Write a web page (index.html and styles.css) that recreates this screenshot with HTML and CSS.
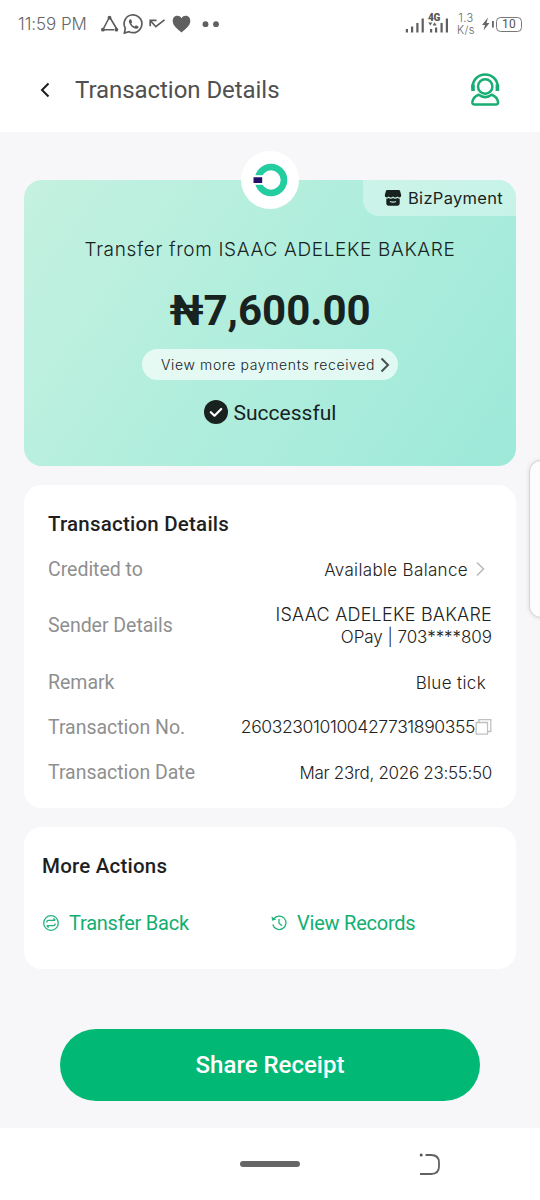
FILE: index.html
```html
<!DOCTYPE html>
<html lang="en">
<head>
<meta charset="utf-8">
<title>Transaction Details</title>
<link rel="stylesheet" href="styles.css">
</head>
<body>
<div class="screen">
  <div class="status">
    <span class="clock">11:59 PM</span>
    <svg class="status-left" width="122" height="28" viewBox="100 10 122 28" fill="none" stroke="#5c5c5c" stroke-width="1.6">
      <path d="M104 29.800H114M103.500 28.500L109 18M110.500 18.500L116.500 28.500"/>
      <g fill="#5b5b5b" stroke="none"><circle cx="109.500" cy="17.700" r="1.900"/><circle cx="102.900" cy="29.700" r="1.900"/><circle cx="116.400" cy="29.700" r="1.900"/></g>
      <path d="M125.300 28.200A8.900 8.900 0 1 1 129 31.700L124.400 33Z" stroke-width="1.700"/>
      <path d="M130 19.300q-1.500 1-1.100 2.800q1.400 5 6.700 6.700q2 .3 3-1.300l-.2-1l-2.400-1.200l-1.400 1.300q-2.300-1-3.400-3.200l1-1.200l-1-2.600z" fill="#5b5b5b" stroke="none"/>
      <path d="M150.500 20.700L155.800 26.700L164.500 19.800M150.200 26.200V20.400H156.500" stroke-width="1.700"/>
      <path d="M181.500 32.500C177 28.500 172.700 25.500 172.700 21C172.700 15.300 179 14.200 181.500 18.200C184 14.200 190.300 15.300 190.300 21C190.300 25.500 186 28.500 181.500 32.500Z" fill="#606060" stroke="none"/>
      <g fill="#606060" stroke="none"><circle cx="205.500" cy="24.200" r="2.900"/><circle cx="216" cy="24.200" r="2.900"/></g>
    </svg>
    <div class="status-right">
      <div class="signals">
        <svg width="46" height="24" viewBox="404 10.500 46 24" fill="#5f5f5f"><path d="M405.800 27.500h2.200V31h-2.200zM411 25h2.200v6h-2.200zM416.300 21.500h2.200V31h-2.200zM421.600 17h2.200v14h-2.200zM430 27.500h2.200V31h-2.200zM435 26h2.200v5h-2.200zM440.500 21.500h2.200V31h-2.200zM445.800 17h2.200v14h-2.200zM428.300 21h4l-2 3zM432.600 24h4l-2-3.200z"/></svg>
        <span class="net">4G</span>
      </div>
      <span class="speed">1.3<br>K/s</span>
      <svg width="13" height="20" viewBox="481 14 13 20" fill="#666"><path d="M488 17.500L482 25h3l-1.500 5.500L489.500 23h-3z"/><rect x="492" y="21" width="1.800" height="6.500"/></svg>
      <span class="battery">10</span>
    </div>
  </div>

  <div class="header">
    <svg class="back" width="12" height="18" viewBox="0 0 12 18" fill="none" stroke="#1c1c1c" stroke-width="2"><path d="M9.500 2.500L3 9L9.500 15.500"/></svg>
    <h1 class="header-title">Transaction Details</h1>
    <svg width="32" height="36" viewBox="469 72 32 36" fill="none" stroke="#18ad72" stroke-width="2.500">
      <path d="M472.700 88v-1.500a12.500 12 0 0 1 25 0V88"/>
      <path d="M473 84.500v6.500M497.400 84.500v6.500" stroke-width="3.600"/>
      <circle cx="485.200" cy="86.500" r="7.200"/>
      <path d="M478.700 94.700q6.500 4.800 13 0q5.600 2 6.400 7.500q.2 2.300-2.300 2.300h-21.200q-2.500 0-2.300-2.300q.8-5.500 6.400-7.500z" stroke-linejoin="round"/>
    </svg>
  </div>

  <main class="content">
    <section class="hero">
      <div class="logo">
        <svg width="36" height="36" viewBox="252 162 36 36"><circle cx="271" cy="180" r="13" fill="none" stroke="#24cda0" stroke-width="6.600"/><path d="M252 175.200h12v9.600h-12z" fill="#fff"/><path d="M253.500 177.200h8.700v5.800h-8.700z" fill="#241163"/></svg>
      </div>
      <div class="biz">
        <svg width="18" height="18" viewBox="0 0 18 18" fill="#18221f"><path d="M3.200 1h11.600q.8 0 1.200.8L17.200 6q.3 2.300-1.700 2.600q-1.300 0-2.100-1q-.9 1-2.200 1T9 7.600q-.9 1-2.200 1t-2.200-1q-.8 1-2.100 1Q.5 8.300.8 6L2 1.800Q2.400 1 3.200 1zM2.300 9.800q1.400 0 2.300-.8q1 .8 2.200.8T9 9q1 .8 2.200.8t2.200-.8q.9.800 2.300.8V14q0 2.800-2.500 2.800H4.800Q2.300 16.800 2.300 14z"/><path d="M6 12.500q3 1.300 6 0" stroke="#c5f1e5" stroke-width="1.200" fill="none"/></svg>
        <span class="biz-text">BizPayment</span>
      </div>
      <p class="from">Transfer from ISAAC ADELEKE BAKARE</p>
      <p class="amount">₦7,600.00</p>
      <div class="more-payments"><span>View more payments received</span>
        <svg width="10" height="16" viewBox="0 0 10 16" fill="none" stroke="#43524e" stroke-width="2"><path d="M1.500 1.500L8 8L1.500 14.500"/></svg>
      </div>
      <div class="success">
        <svg width="24" height="24" viewBox="0 0 24 24"><circle cx="12" cy="12" r="12" fill="#18221f"/><path d="M6.800 12.200L10.500 15.700L17.200 9" fill="none" stroke="#fff" stroke-width="2.200" stroke-linecap="round" stroke-linejoin="round"/></svg>
        <span class="success-text">Successful</span>
      </div>
    </section>

    <section class="card details">
      <h2 class="card-title">Transaction Details</h2>
      <div class="row"><span class="label">Credited to</span><span class="value"><span class="v-balance">Available Balance</span><svg class="chevron" width="9" height="16" viewBox="0 0 9 16" fill="none" stroke="#bbb" stroke-width="1.600"><path d="M1 1.500L7.500 8L1 14.500"/></svg></span></div>
      <div class="row row-tall"><span class="label">Sender Details</span><span class="value stacked"><span class="v-name">ISAAC ADELEKE BAKARE</span><span class="v-account">OPay | 703****809</span></span></div>
      <div class="row"><span class="label">Remark</span><span class="value v-remark">Blue tick</span></div>
      <div class="row"><span class="label">Transaction No.</span><span class="value number-group"><span class="v-number">260323010100427731890355</span><svg width="17" height="18" viewBox="0 0 17 18" fill="none" stroke="#c0c0c0" stroke-width="1.300"><path d="M1.200 4.500h11.300v11.700H1.200zM4 4.500V1.700h11.800v11.800h-3.300"/></svg></span></div>
      <div class="row"><span class="label">Transaction Date</span><span class="value v-date">Mar 23rd, 2026 23:55:50</span></div>
    </section>

    <section class="card actions">
      <h2 class="card-title">More Actions</h2>
      <div class="action-row">
        <div class="action">
          <svg width="18" height="18" viewBox="0 0 18 18" fill="none" stroke="#22b27c" stroke-width="1.300"><circle cx="9" cy="9" r="7.300"/><path d="M4.900 8.500V8q0-1.700 1.700-1.700h6.600M11.300 4.500l2 1.800M13.100 9.500v.5q0 1.700-1.700 1.700H4.800M6.700 13.500l-2-1.800"/></svg>
          <span>Transfer Back</span>
        </div>
        <div class="action">
          <svg width="18" height="18" viewBox="0 0 18 18" fill="none" stroke="#22b27c" stroke-width="1.300"><path d="M3.500 5.400A6.700 6.700 0 1 1 2.800 10.500"/><path d="M1.500 2.500l.7 4.300l4-1.200z" fill="#22b27c" stroke="none"/><path d="M9 5v4.300l3 2.500"/></svg>
          <span>View Records</span>
        </div>
      </div>
    </section>

    <button class="share">Share Receipt</button>
  </main>

  <div class="navbar">
    <span class="home"></span>
    <svg class="nav-back" width="24" height="26" viewBox="417 1151 24 26" fill="none" stroke="#616161" stroke-width="1.800"><path d="M425.500 1155H431q8 0 8 7.500v4q0 7.500-8 7.500h-11"/><circle cx="421.200" cy="1155" r="1.500" fill="#555" stroke="none"/></svg>
  </div>
  <div class="edge-handle"></div>
</div>
</body>
</html>
```
FILE: styles.css
```css
* { box-sizing: border-box; }
body { margin: 0; font-family: Roboto, "Liberation Sans", sans-serif; }
h1, h2, p { margin: 0; }
svg { display: block; flex: none; }
.screen { position: relative; width: 540px; height: 1200px; overflow: hidden; background: #fff; display: flex; flex-direction: column; }

.status { height: 48px; padding: 0 18px; display: flex; align-items: center; color: #666; }
.clock { width: 82px; font: 300 17px/20px Inter, sans-serif; letter-spacing: -0.05px; white-space: nowrap; }
.status-right { margin-left: auto; display: flex; align-items: center; }
.signals { position: relative; margin-right: 4px; }
.net { position: absolute; left: 24px; top: 1px; font: 900 10px/10px Roboto, sans-serif; letter-spacing: -.3px; color: #555; }
.speed { width: 24px; font: 300 11px/12px Inter, sans-serif; letter-spacing: .4px; text-align: center; color: #666; margin-right: 3px; }
.battery { width: 26px; height: 15px; margin-left: 2px; border: 1.5px solid #777; border-radius: 4.5px; font: 400 12px/13px Roboto, sans-serif; letter-spacing: .3px; text-align: center; color: #555; }

.header { height: 84px; padding: 0 39px; display: flex; align-items: center; }
.header-title { flex: 1; margin-left: 24px; font: 400 24px/28px Roboto, sans-serif; letter-spacing: -.05px; color: #505050; }

.content { height: 996px; padding: 48px 24px 27px; background: #f7f7fa; display: flex; flex-direction: column; }
.hero { position: relative; height: 286px; border-radius: 18px; background: linear-gradient(125deg, #c5f1e0 0%, #b3eedd 42%, #9de9da 100%); display: flex; flex-direction: column; align-items: center; padding-top: 57px; color: #18221f; }
.logo { position: absolute; left: 217px; top: -29px; width: 58px; height: 58px; border-radius: 50%; background: #fff; display: flex; align-items: center; justify-content: center; }
.biz { position: absolute; right: 0; top: 0; width: 153px; height: 36px; padding-left: 21px; border-radius: 0 18px 0 16px; background: rgba(255,255,255,.36); display: flex; align-items: center; gap: 6px; }
.biz-text { font: 400 16.5px/20px Inter, sans-serif; letter-spacing: .3px; }
.from { font: 300 19px/26px Inter, sans-serif; letter-spacing: .66px; white-space: nowrap; }
.amount { margin-top: 23px; font: 700 42px/50px Roboto, sans-serif; letter-spacing: 0; }
.more-payments { margin-top: 13px; width: 256px; height: 31px; padding: 0 8px 0 19px; border-radius: 16px; background: rgba(255,255,255,.66); display: flex; align-items: center; justify-content: space-between; font: 300 14px/18px Inter, sans-serif; letter-spacing: .63px; white-space: nowrap; }
.success { margin-top: 19px; display: flex; align-items: center; gap: 6px; font: 400 21px/26px Roboto, sans-serif; }
.success-text { padding-top: 1px; margin-bottom: -1px; }

.card { border-radius: 18px; background: #fff; }
.details { margin-top: 19px; height: 323px; padding: 26px 24px 0; }
.card-title { font: 500 20.5px/26px Roboto, sans-serif; letter-spacing: .22px; color: #1f1f1f; }
.details .card-title { margin-bottom: 10px; }
.row { height: 45px; display: flex; align-items: center; justify-content: space-between; }
.row-tall { height: 68px; }
.label { font-size: 19.5px; line-height: 24px; letter-spacing: -.02px; color: #8f8f8f; }
.value { display: flex; align-items: center; font: 300 17px/22px Inter, sans-serif; color: #222; white-space: nowrap; }
.stacked { flex-direction: column; align-items: flex-end; }
.v-balance { letter-spacing: .34px; }
.chevron { margin: -2px 7px 0 8px; }
.v-name { font-size: 18px; letter-spacing: .22px; }
.v-account { letter-spacing: -.05px; }
.v-remark { margin-right: 6px; letter-spacing: .35px; }
.number-group { margin-top: -2px; }
.v-number { font-size: 17.5px; letter-spacing: -.38px; }
.v-date { letter-spacing: -.3px; }

.actions { margin-top: 19px; height: 142px; padding: 26px 18px 0; }
.action-row { margin-top: 31px; display: grid; grid-template-columns: 228px 1fr; }
.action { display: flex; align-items: center; gap: 9px; font-size: 20px; line-height: 26px; letter-spacing: -.23px; color: #12ae72; }

.share { margin: auto 36px 0; height: 72px; border: 0; border-radius: 36px; background: #02b875; color: #fff; font: 500 24px/30px Roboto, sans-serif; }
.navbar { height: 72px; display: grid; grid-template-columns: 240px 60px 1fr; align-items: center; }
.home { grid-column: 2; height: 6px; border-radius: 3px; background: #666; }
.nav-back { margin-left: 117px; }
.edge-handle { position: absolute; left: 529px; top: 460px; width: 24px; height: 158px; border: 1px solid #d5d5d8; border-radius: 18px; background: #fcfcfd; box-shadow: 0 0 4px rgba(0,0,0,.12); }
```
